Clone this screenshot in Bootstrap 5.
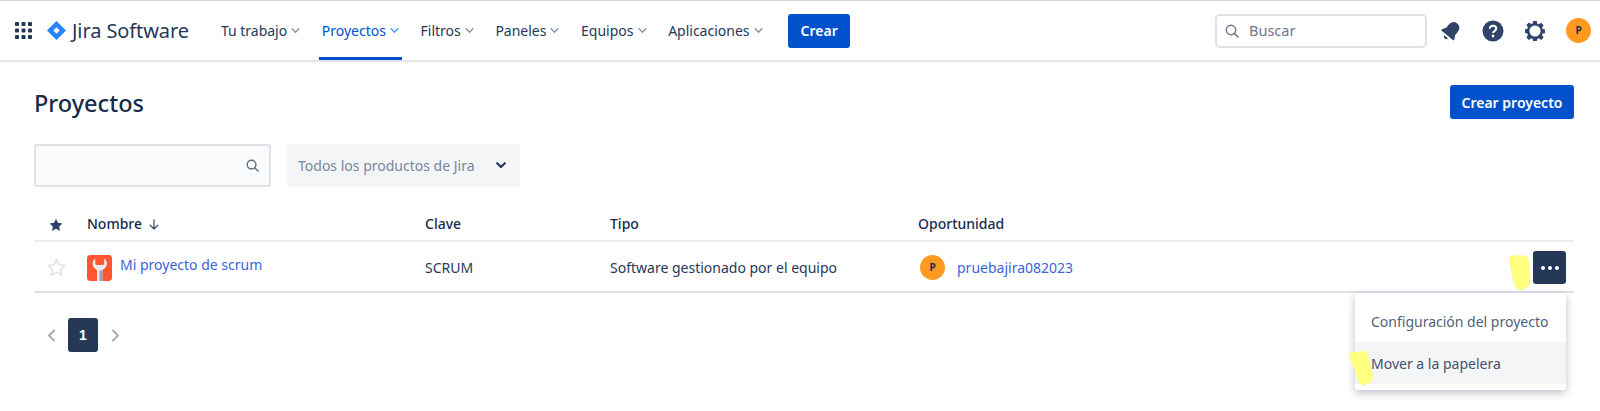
<!DOCTYPE html>
<html lang="es">
<head>
<meta charset="utf-8">
<title>Proyectos</title>
<link href="https://cdn.jsdelivr.net/npm/bootstrap@5.3.0/dist/css/bootstrap.min.css" rel="stylesheet">
<style>
html,body{height:411px;overflow:hidden}
body{font-family:"Noto Sans","Open Sans",sans-serif;font-size:14px;color:#172b4d;background:#fff;position:relative}
.topnav{height:60px;border-top:1px solid #d6d6d6;box-shadow:0 1px 3px rgba(9,30,66,.22);padding-left:15px;padding-right:9px}
.app-grid{margin-right:15px}
.brand-name{font-size:20px;color:#253858;margin-left:6px;margin-right:29px;letter-spacing:-.1px;white-space:nowrap}
.nav-entry{height:100%;display:flex;align-items:center;gap:3px;padding:0 3px;color:#253858;font-size:14px;margin-right:15.6px;text-decoration:none;white-space:nowrap}
.nav-entry svg{color:#8993a4;margin-left:1px}
.nav-entry.current{color:#0052cc;border-bottom:3px solid #0052cc;padding-top:3px}
.nav-entry.current svg{color:#4c9aff}
.blue-btn{background:#0052cc;color:#fff;font-weight:600;font-size:14px;border:0;border-radius:3px;padding:0}
.crear-top{width:62px;height:34px;margin-left:7px}
.crear-page{width:124px;height:34px}
.search-top{width:212px;height:34px;border:2px solid #dfe1e6;border-radius:5px;padding-left:8px;gap:10px;color:#6b778c;font-size:14.5px;margin-right:3px}
.top-icon{width:42px;color:#2f4468}
.avatar-dot{width:25px;height:25px;border-radius:50%;background:#ff991f;color:#172b4d;font-size:10px;font-weight:700}
.page-area{padding:0 26px 0 34px}
.page-title{font-size:23.5px;font-weight:500;color:#172b4d;margin:0;padding-top:2px}
.head-row{height:34px;margin-top:25px}
.filter-row{margin-top:25px;gap:16px;height:43px}
.filter-search{width:237px;border:2px solid #dfe1e6;background:#fafbfc;border-radius:3px;padding-right:10px;color:#5e6c84}
.filter-select{width:233px;background:#f4f5f7;border-radius:3px;padding:0 14px 0 11px;color:#7a869a;font-size:14px}
.proj-table{table-layout:fixed;width:1540px;margin:17px 0 0;color:#253858;font-size:14px}
.proj-table th,.proj-table td{padding:0;vertical-align:middle;background:transparent;box-shadow:none;color:inherit}
.proj-table th{font-weight:500;height:37px;border-bottom:2px solid #ebecf0;color:#172b4d;padding-top:2px}
.proj-table td{height:51px;border-bottom:2px solid #dfe1e6}
.proj-table a{color:#3b63d8;text-decoration:none}
.sort-arrow{margin-left:7px}
.proj-table th.star-head{padding-left:15px}
.proj-table td.star-cell{padding-left:13px}
.proj-icon{width:25px;height:26px;border-radius:3px;margin-right:8px;flex:none}
.proj-line{margin-top:2px}
.proj-line a{margin-top:-6px}
.proj-table td.text-drop{padding-top:2px}
.more-btn{width:33px;height:33px;background:#253858;border:0;border-radius:3px;gap:3px;margin-right:8px;padding:0}
.more-btn i{width:4px;height:4px;border-radius:50%;background:#fff;display:block}
.pager{margin-top:25px;height:34px;padding-left:13px}
.page-num{width:30px;height:34px;background:#253858;color:#fff;border:0;border-radius:3px;font-weight:700;font-size:14px;margin:0 13px 0 12px;padding:0;font-family:"Liberation Sans",sans-serif}
.row-menu{position:absolute;left:1355px;top:293px;width:211px;height:97px;background:#fff;border-radius:3px;box-shadow:0 3px 8px rgba(9,30,66,.28);padding-top:7px;z-index:3}
.row-menu div{height:42px;padding-left:16px;display:flex;align-items:center;color:#505f79;font-size:14px}
.row-menu .hovered{background:#f4f5f7;color:#42526e}
.avatar-row{margin-left:2px;margin-right:12px}
.avatar-top{margin-left:10px}
.marker{position:absolute;z-index:4;pointer-events:none}
</style>
</head>
<body>
<nav class="topnav d-flex align-items-center">
  <svg class="app-grid" width="17" height="17" viewBox="0 0 17 17" fill="#253858"><rect x="0" y="0" width="4" height="4" rx=".8"/><rect x="6.500" y="0" width="4" height="4" rx=".8"/><rect x="13" y="0" width="4" height="4" rx=".8"/><rect x="0" y="6.500" width="4" height="4" rx=".8"/><rect x="6.500" y="6.500" width="4" height="4" rx=".8"/><rect x="13" y="6.500" width="4" height="4" rx=".8"/><rect x="0" y="13" width="4" height="4" rx=".8"/><rect x="6.500" y="13" width="4" height="4" rx=".8"/><rect x="13" y="13" width="4" height="4" rx=".8"/></svg>
  <svg width="19" height="19" viewBox="0 0 19 19"><path d="M9.500 0 19 9.500 9.500 19 0 9.500Z" fill="#2684ff"/><path d="M9.500 6.300 12.700 9.500 9.500 12.700 6.300 9.500Z" fill="#fff"/></svg>
  <span class="brand-name">Jira Software</span>
  <a class="nav-entry" href="#">Tu trabajo <svg width="9" height="5" viewBox="0 0 10 6" fill="none" stroke="currentColor" stroke-width="1.800" stroke-linecap="round" stroke-linejoin="round"><path d="M1 1l4 4 4-4"/></svg></a>
  <a class="nav-entry current" href="#">Proyectos <svg width="9" height="5" viewBox="0 0 10 6" fill="none" stroke="currentColor" stroke-width="1.800" stroke-linecap="round" stroke-linejoin="round"><path d="M1 1l4 4 4-4"/></svg></a>
  <a class="nav-entry" href="#">Filtros <svg width="9" height="5" viewBox="0 0 10 6" fill="none" stroke="currentColor" stroke-width="1.800" stroke-linecap="round" stroke-linejoin="round"><path d="M1 1l4 4 4-4"/></svg></a>
  <a class="nav-entry" href="#">Paneles <svg width="9" height="5" viewBox="0 0 10 6" fill="none" stroke="currentColor" stroke-width="1.800" stroke-linecap="round" stroke-linejoin="round"><path d="M1 1l4 4 4-4"/></svg></a>
  <a class="nav-entry" href="#">Equipos <svg width="9" height="5" viewBox="0 0 10 6" fill="none" stroke="currentColor" stroke-width="1.800" stroke-linecap="round" stroke-linejoin="round"><path d="M1 1l4 4 4-4"/></svg></a>
  <a class="nav-entry" href="#">Aplicaciones <svg width="9" height="5" viewBox="0 0 10 6" fill="none" stroke="currentColor" stroke-width="1.800" stroke-linecap="round" stroke-linejoin="round"><path d="M1 1l4 4 4-4"/></svg></a>
  <button class="blue-btn crear-top" type="button">Crear</button>
  <div class="search-top d-flex align-items-center ms-auto">
    <svg width="14" height="14" viewBox="0 0 14 14" fill="none" stroke="#6b778c" stroke-width="1.500" stroke-linecap="round"><circle cx="6" cy="6" r="4.700"/><path d="M9.600 9.600 13 13"/></svg>
    <span>Buscar</span>
  </div>
  <div class="top-icon d-flex justify-content-center"><svg width="20" height="20" viewBox="0 0 20 20" fill="currentColor"><g transform="rotate(40 10 10) translate(-1.500 -1.500) scale(1.150)"><path d="M10 1.500c-3.200 0-5 2.400-5 5.400v3.600L3 14v1h14v-1l-2-3.500V6.900c0-3-1.800-5.400-5-5.400Z"/><path d="M8 16.500h4a2 2 0 0 1-4 0Z"/></g></svg></div>
  <div class="top-icon d-flex justify-content-center"><svg width="22" height="22" viewBox="0 0 22 22"><circle cx="11" cy="11" r="10.500" fill="currentColor"/><path d="M7.800 8.700c0-1.900 1.400-3 3.200-3s3.200 1.100 3.200 2.800c0 2.400-3.100 2.500-3.100 4.600" fill="none" stroke="#fff" stroke-width="2.100"/><circle cx="11" cy="16" r="1.400" fill="#fff"/></svg></div>
  <div class="top-icon d-flex justify-content-center"><svg width="20" height="20" viewBox="0 0 20 20" fill="currentColor"><path fill-rule="evenodd" d="M8.200 0h3.600l.5 2.700 1.500.6 2.300-1.600 2.500 2.500-1.600 2.300.6 1.500 2.700.5v3.600l-2.700.5-.6 1.500 1.600 2.300-2.500 2.500-2.300-1.600-1.500.6-.5 2.700H8.200l-.5-2.700-1.500-.6-2.300 1.600-2.500-2.500 1.600-2.300-.6-1.500L-.3 11.800V8.200l2.700-.5.6-1.500-1.600-2.300 2.500-2.500 2.300 1.600 1.500-.6ZM10 4.400a5.600 5.600 0 1 0 0 11.200 5.600 5.600 0 0 0 0-11.200Z"/></svg></div>
  <div class="avatar-dot avatar-top d-flex align-items-center justify-content-center">P</div>
</nav>

<main class="page-area">
  <div class="head-row d-flex align-items-center justify-content-between">
    <h1 class="page-title">Proyectos</h1>
    <button class="blue-btn crear-page" type="button">Crear proyecto</button>
  </div>
  <div class="filter-row d-flex">
    <div class="filter-search d-flex align-items-center justify-content-end">
      <svg width="13" height="13" viewBox="0 0 14 14" fill="none" stroke="#5e6c84" stroke-width="1.500" stroke-linecap="round"><circle cx="6" cy="6" r="4.700"/><path d="M9.600 9.600 13 13"/></svg>
    </div>
    <div class="filter-select d-flex align-items-center justify-content-between">
      <span>Todos los productos de Jira</span>
      <svg width="10" height="7" viewBox="0 0 10 7" fill="none" stroke="#253858" stroke-width="2.200" stroke-linecap="round" stroke-linejoin="round"><path d="M1.200 1.200 5 5l3.800-3.800"/></svg>
    </div>
  </div>
  <table class="table proj-table">
    <colgroup><col style="width:53px"><col style="width:338px"><col style="width:185px"><col style="width:308px"><col></colgroup>
    <thead>
      <tr>
        <th class="star-head"><svg width="14" height="14" viewBox="0 0 20 20" fill="#2f4468"><path d="M10 1l2.800 5.900 6.400.8-4.700 4.400 1.200 6.400L10 15.400l-5.700 3.100 1.200-6.400L.8 7.700l6.400-.8Z"/></svg></th>
        <th>Nombre<svg class="sort-arrow" width="10" height="11" viewBox="0 0 10 11" fill="none" stroke="#42526e" stroke-width="1.300" stroke-linecap="round" stroke-linejoin="round"><path d="M5 1v9M1.200 6.300 5 10l3.800-3.700"/></svg></th>
        <th>Clave</th>
        <th>Tipo</th>
        <th>Oportunidad</th>
      </tr>
    </thead>
    <tbody>
      <tr>
        <td class="star-cell"><svg width="19" height="19" viewBox="0 0 20 20" fill="#fff" stroke="#dfe1e6" stroke-width="1.600" stroke-linejoin="round"><path d="M10 1.500l2.600 5.600 6.100.8-4.500 4.200 1.200 6L10 15.100l-5.400 3 1.200-6L1.300 7.900l6.100-.8Z"/></svg></td>
        <td>
          <div class="d-flex align-items-center proj-line">
            <svg class="proj-icon" viewBox="0 0 25 26"><rect width="25" height="26" rx="3" fill="#ff5630"/><path d="M8.300 3.500C5 5.500 4.700 10.500 7.500 13c1.300 1.100 2.500 1.500 2.500 3.200V26h5.500v-9.800c0-1.700 1.200-2.100 2.500-3.200 2.800-2.500 2.500-7.500-.8-9.500v4.700c0 1.100-1 1.800-1.700 1.800h-5.500c-.7 0-1.700-.7-1.700-1.800Z" fill="#ebecf0"/><rect x="12.500" y="15.500" width="3" height="10.500" fill="#97a0af"/></svg>
            <a href="#">Mi proyecto de scrum</a>
          </div>
        </td>
        <td class="text-drop">SCRUM</td>
        <td class="text-drop">Software gestionado por el equipo</td>
        <td class="text-drop">
          <div class="d-flex align-items-center justify-content-between">
            <div class="d-flex align-items-center">
              <span class="avatar-dot avatar-row d-flex align-items-center justify-content-center">P</span>
              <a href="#">pruebajira082023</a>
            </div>
            <button class="more-btn d-flex align-items-center justify-content-center" type="button" aria-label="Más"><i></i><i></i><i></i></button>
          </div>
        </td>
      </tr>
    </tbody>
  </table>
  <div class="pager d-flex align-items-center">
    <svg width="9" height="13" viewBox="0 0 9 13" fill="none" stroke="#a5adba" stroke-width="2" stroke-linecap="round" stroke-linejoin="round"><path d="M7 1.500 2 6.500l5 5"/></svg>
    <button class="page-num" type="button">1</button>
    <svg width="9" height="13" viewBox="0 0 9 13" fill="none" stroke="#a5adba" stroke-width="2" stroke-linecap="round" stroke-linejoin="round"><path d="M2 1.500l5 5-5 5"/></svg>
  </div>
</main>

<div class="row-menu">
  <div>Configuración del proyecto</div>
  <div class="hovered">Mover a la papelera</div>
</div>

<svg class="marker" style="left:1509px;top:255px" width="22" height="35" viewBox="0 0 22 35"><path d="M0 1C6 0 13 0 17 1c2 1 3 3 3 8 1 8 2 15 1 19-2 5-6 7-10 7-4-1-6-5-7-10C3 18 0 10 0 1Z" fill="#ffff80"/></svg>
<svg class="marker" style="left:1349px;top:350px" width="24" height="35" viewBox="0 0 24 35"><path d="M0 3C6 1 12 3 18 0c1 2 1 6 2 10 2 7 4 13 4 18-2 5-6 7-10 7-4-1-6-5-7-11C5 16 0 10 0 3Z" fill="#ffff80"/></svg>
</body>
</html>
